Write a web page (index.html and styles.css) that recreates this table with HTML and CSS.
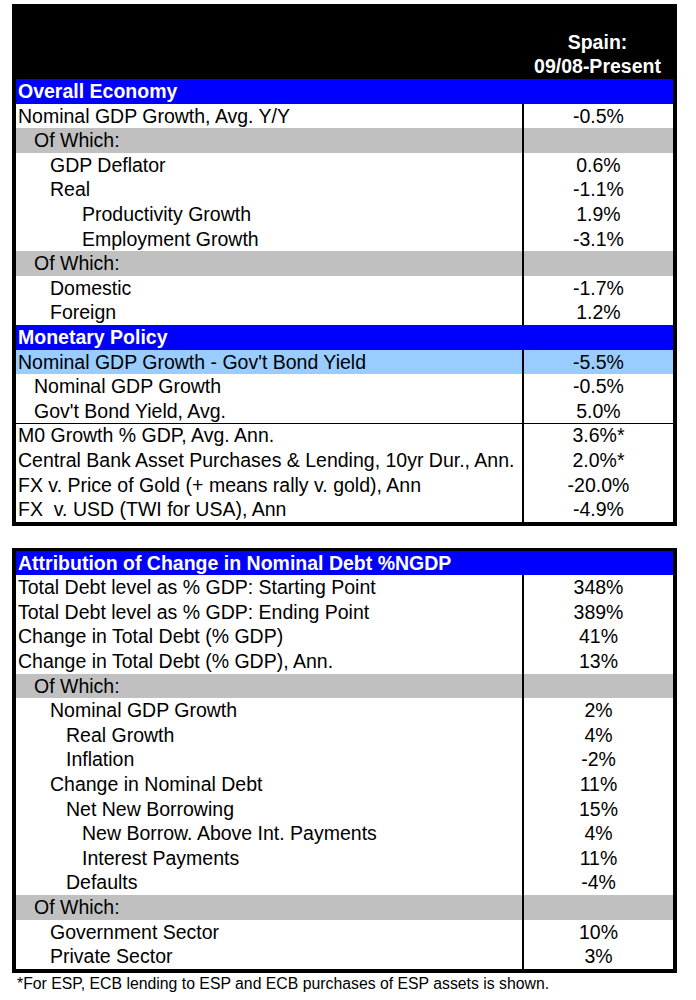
FILE: index.html
```html
<!DOCTYPE html>
<html>
<head>
<meta charset="utf-8">
<link rel="stylesheet" href="styles.css">
</head>
<body>
<div class="page">
  <div class="tbl">
    <div class="head">
      <div class="head-label"></div>
      <div class="head-val"><div>Spain:</div><div>09/08-Present</div></div>
    </div>
    <div class="band">Overall Economy</div>
    <div class="row"><div class="lab l0">Nominal GDP Growth, Avg. Y/Y</div><div class="val">-0.5%</div></div>
    <div class="row gray"><div class="lab l1">Of Which:</div><div class="val"></div></div>
    <div class="row"><div class="lab l2">GDP Deflator</div><div class="val">0.6%</div></div>
    <div class="row"><div class="lab l2">Real</div><div class="val">-1.1%</div></div>
    <div class="row"><div class="lab l4">Productivity Growth</div><div class="val">1.9%</div></div>
    <div class="row"><div class="lab l4">Employment Growth</div><div class="val">-3.1%</div></div>
    <div class="row gray"><div class="lab l1">Of Which:</div><div class="val"></div></div>
    <div class="row"><div class="lab l2">Domestic</div><div class="val">-1.7%</div></div>
    <div class="row"><div class="lab l2">Foreign</div><div class="val">1.2%</div></div>
    <div class="band">Monetary Policy</div>
    <div class="row light"><div class="lab l0">Nominal GDP Growth - Gov't Bond Yield</div><div class="val">-5.5%</div></div>
    <div class="row"><div class="lab l1">Nominal GDP Growth</div><div class="val">-0.5%</div></div>
    <div class="row"><div class="lab l1">Gov't Bond Yield, Avg.</div><div class="val">5.0%</div></div>
    <div class="row sep"><div class="lab l0">M0 Growth % GDP, Avg. Ann.</div><div class="val">3.6%*</div></div>
    <div class="row"><div class="lab l0">Central Bank Asset Purchases &amp; Lending, 10yr Dur., Ann.</div><div class="val">2.0%*</div></div>
    <div class="row"><div class="lab l0">FX v. Price of Gold (+ means rally v. gold), Ann</div><div class="val">-20.0%</div></div>
    <div class="row"><div class="lab l0">FX&nbsp; v. USD (TWI for USA), Ann</div><div class="val">-4.9%</div></div>
  </div>

  <div class="tbl tbl2">
    <div class="band">Attribution of Change in Nominal Debt %NGDP</div>
    <div class="row"><div class="lab l0">Total Debt level as % GDP: Starting Point</div><div class="val">348%</div></div>
    <div class="row"><div class="lab l0">Total Debt level as % GDP: Ending Point</div><div class="val">389%</div></div>
    <div class="row"><div class="lab l0">Change in Total Debt (% GDP)</div><div class="val">41%</div></div>
    <div class="row"><div class="lab l0">Change in Total Debt (% GDP), Ann.</div><div class="val">13%</div></div>
    <div class="row gray"><div class="lab l1">Of Which:</div><div class="val"></div></div>
    <div class="row"><div class="lab l2">Nominal GDP Growth</div><div class="val">2%</div></div>
    <div class="row"><div class="lab l3">Real Growth</div><div class="val">4%</div></div>
    <div class="row"><div class="lab l3">Inflation</div><div class="val">-2%</div></div>
    <div class="row"><div class="lab l2">Change in Nominal Debt</div><div class="val">11%</div></div>
    <div class="row"><div class="lab l3">Net New Borrowing</div><div class="val">15%</div></div>
    <div class="row"><div class="lab l4">New Borrow. Above Int. Payments</div><div class="val">4%</div></div>
    <div class="row"><div class="lab l4">Interest Payments</div><div class="val">11%</div></div>
    <div class="row"><div class="lab l3">Defaults</div><div class="val">-4%</div></div>
    <div class="row gray"><div class="lab l1">Of Which:</div><div class="val"></div></div>
    <div class="row"><div class="lab l2">Government Sector</div><div class="val">10%</div></div>
    <div class="row"><div class="lab l2">Private Sector</div><div class="val">3%</div></div>
  </div>
  <div class="note">*For ESP, ECB lending to ESP and ECB purchases of ESP assets is shown.</div>
</div>
</body>
</html>
```

FILE: styles.css
```css
html, body {
  margin: 0;
  padding: 0;
  background: #fff;
}
.page {
  padding-top: 4px;
  font-family: "Liberation Sans", Arial, sans-serif;
  font-size: 19.5px;
  color: #000;
}
.tbl {
  margin-left: 12px;
  width: 665px;
  box-sizing: border-box;
  border: 4px solid #000;
  border-top-width: 0;
}
.tbl2 {
  margin-top: 22px;
  border-top-width: 3px;
}
.head {
  display: grid;
  grid-template-columns: 506px 151px;
  background: #000;
  height: 75px;
  color: #fff;
  font-weight: bold;
}
.head-val {
  display: flex;
  flex-direction: column;
  justify-content: flex-end;
  align-items: center;
  line-height: 24.6px;
  padding-bottom: 0;
}
.band {
  background: #0000ff;
  color: #fff;
  font-weight: bold;
  height: 24.6px;
  line-height: 25.4px;
  padding-left: 2px;
  white-space: nowrap;
}
.row {
  display: grid;
  grid-template-columns: 506px 151px;
  height: 24.6px;
  line-height: 24.6px;
  box-sizing: border-box;
}
.row.gray {
  background: #c0c0c0;
}
.row.light {
  background: #99ccff;
}
.row.sep {
  border-top: 1px solid #000;
  line-height: 23.6px;
}
.lab {
  white-space: nowrap;
  overflow: hidden;
}
.val {
  border-left: 2px solid #000;
  text-align: center;
  white-space: nowrap;
}
.l0 { padding-left: 2px; }
.l1 { padding-left: 18px; }
.l2 { padding-left: 34px; }
.l3 { padding-left: 50px; }
.l4 { padding-left: 66px; }
.note {
  margin-left: 17px;
  margin-top: 2px;
  font-size: 15.8px;
  line-height: 18px;
}
```
